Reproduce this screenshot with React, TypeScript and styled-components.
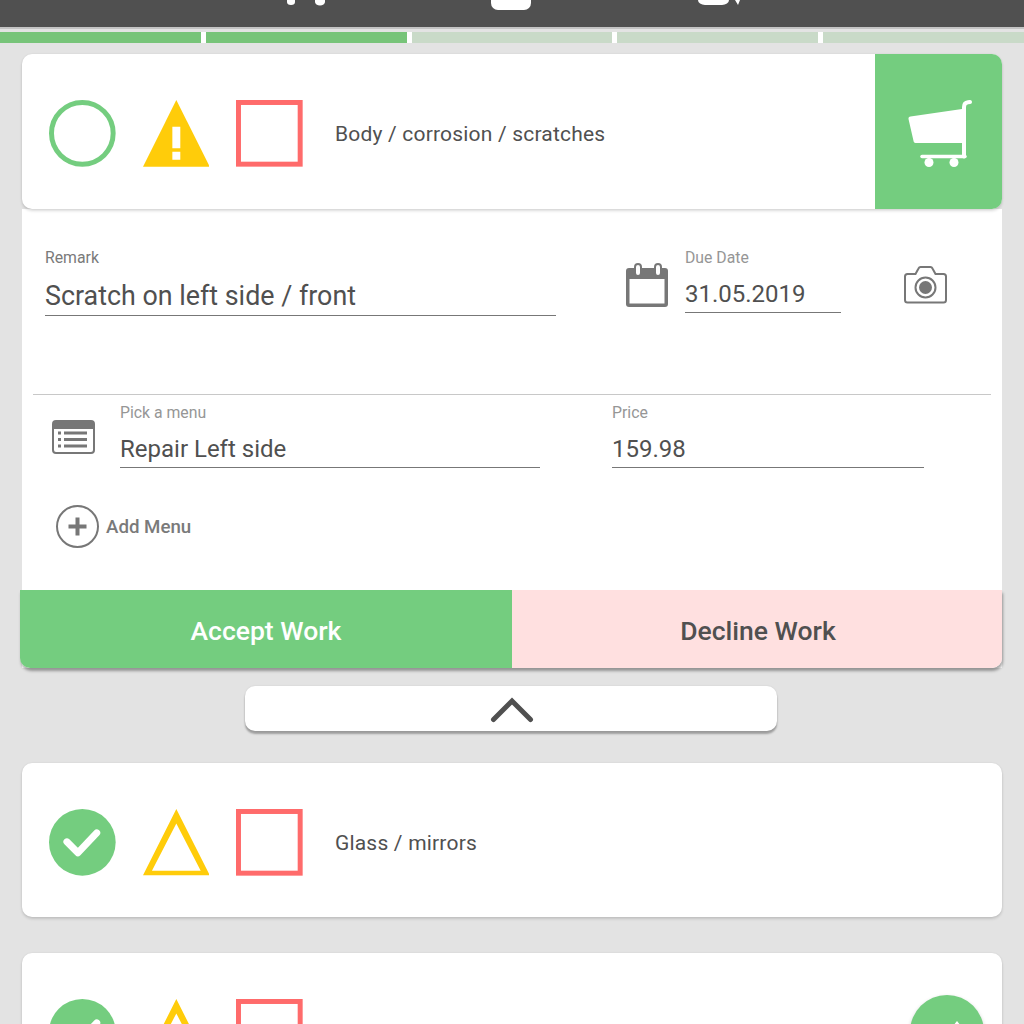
import styled, { createGlobalStyle } from 'styled-components';

const GlobalStyle = createGlobalStyle`
  html, body {
    margin: 0;
    padding: 0;
    background: #e3e3e3;
  }
  * {
    box-sizing: border-box;
  }
`;

const Page = styled.div`
  width: 1024px;
  height: 1024px;
  overflow: hidden;
  background: #e3e3e3;
  font-family: Roboto, 'Liberation Sans', sans-serif;
  color: #505050;
`;

const Header = styled.header`
  height: 29px;
  background: #505050;
  border-bottom: 2px solid #c4c4c4;
  display: flex;
  align-items: flex-start;
  overflow: hidden;
`;

const HeaderIcon = styled.svg<{ $left: number }>`
  display: block;
  flex: none;
  margin-left: ${(p) => p.$left}px;
`;

const Progress = styled.div`
  height: 11px;
  margin-top: 3px;
  display: flex;
  gap: 5px;
  background: #fff;
`;

const Step = styled.div<{ $done?: boolean }>`
  flex: 1;
  background: ${(p) => (p.$done ? '#77c479' : '#c9dac8')};
`;

const Panel = styled.section`
  margin: 11px 22px 0;
  height: 614px;
  display: flex;
  flex-direction: column;
`;

const CheckItem = styled.div<{ $height: number }>`
  position: relative;
  z-index: 1;
  flex: none;
  height: ${(p) => p.$height}px;
  background: #fff;
  border-radius: 10px;
  display: flex;
  box-shadow: 0 2px 3px rgba(0, 0, 0, 0.14), 0 0 2px rgba(0, 0, 0, 0.08);
`;

const CheckBody = styled.div`
  flex: 1;
  display: flex;
  align-items: flex-start;
  padding: 46px 0 0 27.33px;
`;

const Symbols = styled.div`
  display: flex;
  align-items: flex-start;
  gap: 26.67px;
`;

const CheckLabel = styled.div`
  margin: 22px 0 0 32.33px;
  font-size: 21px;
  line-height: 24px;
  letter-spacing: 0.2px;
`;

const CartCell = styled.div`
  width: 127px;
  background: #74cd7f;
  border-radius: 0 10px 10px 0;
  display: flex;
  padding: 44px 0 0 33px;
`;

const Details = styled.div`
  flex: 1;
  display: flex;
  flex-direction: column;
  background: #fff;
`;

const TopFields = styled.div`
  height: 186px;
  margin: 0 11px;
  padding: 40px 0 0 12px;
  display: flex;
  align-items: flex-start;
  border-bottom: 1px solid #c8c8c8;
`;

const Field = styled.div<{ $width: number }>`
  width: ${(p) => p.$width}px;
  flex: none;
`;

const FieldLabel = styled.div<{ $soft?: boolean }>`
  font-size: 15.8px;
  line-height: 17px;
  color: ${(p) => (p.$soft ? '#969696' : '#7a7a7a')};
`;

const FieldValue = styled.div<{ $size: number; $top: number; $pad?: number }>`
  margin-top: ${(p) => p.$top}px;
  font-size: ${(p) => p.$size}px;
  line-height: 30px;
  padding-bottom: ${(p) => p.$pad ?? 3}px;
  border-bottom: 1px solid #777;
  color: #505050;
  white-space: nowrap;
`;

const DateIcon = styled.svg`
  flex: none;
  margin: 14px 17px 0 70px;
`;

const PhotoIcon = styled.svg`
  flex: none;
  margin: 17px 0 0 63px;
`;

const MenuFields = styled.div`
  padding: 9px 0 0 30px;
  display: flex;
  align-items: flex-start;
`;

const MenuIcon = styled.svg`
  flex: none;
  margin: 16px 25px 0 0;
`;

const PriceField = styled(Field)`
  margin-left: 72px;
`;

const AddMenu = styled.button`
  align-self: flex-start;
  margin: 37px 0 0 34px;
  padding: 0;
  border: 0;
  background: none;
  display: flex;
  align-items: center;
  gap: 7px;
  font: 500 18.7px/22px Roboto, 'Liberation Sans', sans-serif;
  color: #7a7a7a;
`;

const Actions = styled.div`
  margin: auto 0 0 -2px;
  height: 78px;
  display: flex;
  border-radius: 0 0 10px 10px;
  overflow: hidden;
  box-shadow: 1px 3px 3px rgba(0, 0, 0, 0.35);
`;

const ActionButton = styled.button<{ $accept?: boolean }>`
  flex: none;
  width: ${(p) => (p.$accept ? 492 : 490)}px;
  border: 0;
  padding: 4px 0 0 ${(p) => (p.$accept ? 0 : 2)}px;
  font: 500 26.5px/30px Roboto, 'Liberation Sans', sans-serif;
  background: ${(p) => (p.$accept ? '#74cd7f' : '#ffe0e0')};
  color: ${(p) => (p.$accept ? '#fff' : '#505050')};
`;

const CollapseButton = styled.button`
  display: flex;
  justify-content: center;
  width: 532px;
  height: 45px;
  margin: 18px 0 0 245px;
  padding: 11px 0 0 2px;
  border: 0;
  background: #fff;
  border-radius: 10px;
  box-shadow: 0 3px 2px rgba(0, 0, 0, 0.3), 0 0 2px rgba(0, 0, 0, 0.1);
`;

const CardList = styled.div`
  margin: 32px 22px 0;
  display: flex;
  flex-direction: column;
  gap: 36px;
`;

const Fab = styled.button`
  width: 74px;
  height: 74px;
  flex: none;
  margin: 42px 18px 0 0;
  padding: 26px 0 0 43px;
  border: 0;
  border-radius: 50%;
  background: #74cd7f;
  box-shadow: 0 2px 4px rgba(0, 0, 0, 0.2);
  display: flex;
  align-items: flex-start;
`;

const GREEN = '#74cd7f';
const YELLOW = '#ffcc0a';
const RED = '#ff6b6b';
const GREY = '#777';

const Circle = ({ checked }: { checked?: boolean }) => (
  <svg width="66.67" height="66.67" viewBox="0 0 67 67">
    {checked ? (
      <>
        <circle cx="33.5" cy="33.5" r="33.5" fill={GREEN} />
        <path d="M18 33l11 11 19-20" fill="none" stroke="#fff" strokeWidth="7" strokeLinejoin="round" strokeLinecap="round" />
      </>
    ) : (
      <circle cx="33.5" cy="33.5" r="31" fill="none" stroke={GREEN} strokeWidth="5" />
    )}
  </svg>
);

const Triangle = ({ warning }: { warning?: boolean }) => (
  <svg width="66.67" height="66.67" viewBox="0 0 67 67">
    {warning ? (
      <>
        <path d="M33.5 0L67 67H0z" fill={YELLOW} />
        <path d="M29.500 27h8v21.500h-8zM29.500 52h8v8h-8z" fill="#fff" />
      </>
    ) : (
      <path d="M33.500 0L67 66.500H0zM33.500 14.500L9 62h49z" fill={YELLOW} fillRule="evenodd" />
    )}
  </svg>
);

const Square = () => (
  <svg width="66.67" height="66.67" viewBox="0 0 67 67">
    <rect x="2.500" y="2.500" width="62" height="62" fill="none" stroke={RED} strokeWidth="5" />
  </svg>
);

const Cart = () => (
  <svg width="64" height="70" viewBox="0 0 64 70">
    <path d="M2.500 18.600L54 11v34H7.500c-1 0-1.700-.7-1.900-1.700L.5 21c-.2-1.300.6-2.200 2-2.400z" fill="#fff" />
    <path d="M56 58.500V9c0-3 1.500-4.500 4-4.800L62 4" fill="none" stroke="#fff" strokeWidth="4" strokeLinecap="round" />
    <path d="M14 58.500h43" stroke="#fff" strokeWidth="3.500" strokeLinecap="round" />
    <circle cx="21" cy="64.500" r="4.500" fill="#fff" />
    <circle cx="46" cy="64.500" r="4.500" fill="#fff" />
  </svg>
);

const App = () => (
  <Page>
    <GlobalStyle />
    <Header>
      <HeaderIcon $left={287} width="38" height="6" viewBox="0 0 38 6">
        <path d="M0 0h8v2a4 3 0 0 1-8 0zM28 0h10v2a5 3.500 0 0 1-10 0z" fill="#fff" />
      </HeaderIcon>
      <HeaderIcon $left={166} width="40" height="10" viewBox="0 0 40 10">
        <path d="M0 0h40v3a7 7 0 0 1-7 7H7a7 7 0 0 1-7-7z" fill="#fff" />
      </HeaderIcon>
      <HeaderIcon $left={167} width="43" height="6" viewBox="0 0 43 6">
        <path d="M0 0h31a7 5 0 0 1-7 5H7a7 5 0 0 1-7-5zM37 0h5l-2 5z" fill="#fff" />
      </HeaderIcon>
    </Header>
    <Progress>
      <Step $done />
      <Step $done />
      <Step />
      <Step />
      <Step />
    </Progress>

    <Panel>
      <CheckItem $height={155}>
        <CheckBody>
          <Symbols>
            <Circle />
            <Triangle warning />
            <Square />
          </Symbols>
          <CheckLabel>Body / corrosion / scratches</CheckLabel>
        </CheckBody>
        <CartCell>
          <Cart />
        </CartCell>
      </CheckItem>

      <Details>
        <TopFields>
          <Field $width={511}>
            <FieldLabel>Remark</FieldLabel>
            <FieldValue $size={26.85} $top={15} $pad={4}>Scratch on left side / front</FieldValue>
          </Field>
          <DateIcon width="42" height="44" viewBox="0 0 42 44">
            <rect x="0" y="5" width="42" height="39" rx="3" fill={GREY} />
            <rect x="3.500" y="16" width="35" height="24.500" fill="#fff" />
            <rect x="9" y="1" width="6" height="12" rx="3" fill="#fff" stroke={GREY} strokeWidth="2" />
            <rect x="29" y="1" width="6" height="12" rx="3" fill="#fff" stroke={GREY} strokeWidth="2" />
          </DateIcon>
          <Field $width={156}>
            <FieldLabel $soft>Due Date</FieldLabel>
            <FieldValue $size={24} $top={13}>31.05.2019</FieldValue>
          </Field>
          <PhotoIcon width="43" height="38" viewBox="0 0 43 38">
            <path d="M3.500 8h8l3-5.500C15 1.500 15.500 1 16.500 1h10c1 0 1.500.5 2 1.500l3 5.500h8c1.500 0 2.500 1 2.500 2.500V34c0 1.500-1 2.500-2.500 2.500h-36C2 36.500 1 35.500 1 34V10.500C1 9 2 8 3.500 8z" fill="none" stroke={GREY} strokeWidth="2" />
            <circle cx="21.500" cy="21.500" r="10" fill="none" stroke={GREY} strokeWidth="2" />
            <circle cx="21.500" cy="21.500" r="6.500" fill={GREY} />
          </PhotoIcon>
        </TopFields>

        <MenuFields>
          <MenuIcon width="43" height="34" viewBox="0 0 43 34">
            <rect x="1" y="1" width="41" height="32" rx="3" fill="#fff" stroke={GREY} strokeWidth="2" />
            <path d="M1 4a3 3 0 0 1 3-3h35a3 3 0 0 1 3 3v5H1z" fill={GREY} />
            <path d="M12 13h23M12 19.500h23M12 26h23" stroke={GREY} strokeWidth="3" />
            <path d="M6 13h3M6 19.500h3M6 26h3" stroke={GREY} strokeWidth="3" />
          </MenuIcon>
          <Field $width={420}>
            <FieldLabel $soft>Pick a menu</FieldLabel>
            <FieldValue $size={24} $top={13}>Repair Left side</FieldValue>
          </Field>
          <PriceField $width={312}>
            <FieldLabel $soft>Price</FieldLabel>
            <FieldValue $size={24} $top={13}>159.98</FieldValue>
          </PriceField>
        </MenuFields>

        <AddMenu>
          <svg width="43" height="43" viewBox="0 0 43 43">
            <circle cx="21.500" cy="21.500" r="20.500" fill="none" stroke={GREY} strokeWidth="2" />
            <path d="M21.500 12.500v18M12.500 21.500h18" stroke={GREY} strokeWidth="4" />
          </svg>
          Add Menu
        </AddMenu>

        <Actions>
          <ActionButton $accept>Accept Work</ActionButton>
          <ActionButton>Decline Work</ActionButton>
        </Actions>
      </Details>
    </Panel>

    <CollapseButton>
      <svg width="44" height="26" viewBox="0 0 44 26">
        <path d="M3.500 22.500L22 4l18.500 18.500" fill="none" stroke="#505050" strokeWidth="5" strokeLinecap="round" />
      </svg>
    </CollapseButton>

    <CardList>
      <CheckItem $height={154}>
        <CheckBody>
          <Symbols>
            <Circle checked />
            <Triangle />
            <Square />
          </Symbols>
          <CheckLabel>Glass / mirrors</CheckLabel>
        </CheckBody>
      </CheckItem>
      <CheckItem $height={154}>
        <CheckBody>
          <Symbols>
            <Circle checked />
            <Triangle />
            <Square />
          </Symbols>
        </CheckBody>
        <Fab>
          <svg width="8" height="6" viewBox="0 0 8 6">
            <path d="M4 0l4 5v1H0V5z" fill="#fff" />
          </svg>
        </Fab>
      </CheckItem>
    </CardList>
  </Page>
);

export default App;
